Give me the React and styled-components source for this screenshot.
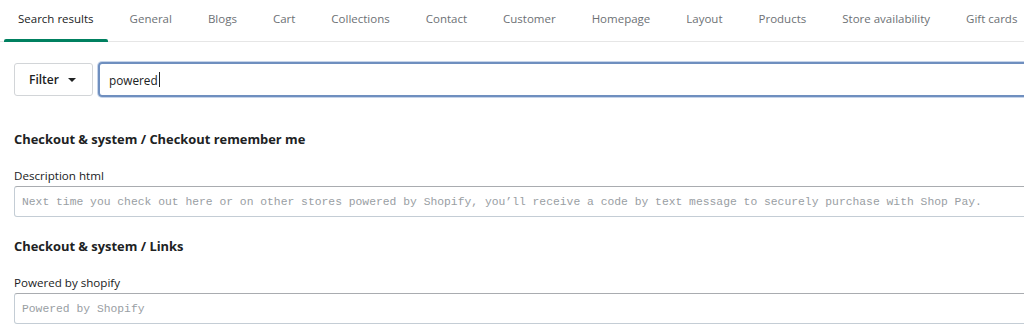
import styled, { createGlobalStyle } from "styled-components";

const GlobalStyle = createGlobalStyle`
  html, body {
    margin: 0;
    padding: 0;
    background: #ffffff;
    overflow: hidden;
  }
  body {
    font-family: "Open Sans", "Noto Sans", sans-serif;
    color: #202223;
  }
`;

const Page = styled.div`
  width: 1100px;
`;

const Tabs = styled.nav`
  display: flex;
  align-items: stretch;
  gap: 8px;
  height: 41px;
  padding-left: 4px;
  border-bottom: 1px solid #e6e6e6;
`;

const Tab = styled.div`
  position: relative;
  display: flex;
  align-items: center;
  padding: 0 14px 4px;
  font-size: 11.5px;
  color: ${({ $active }) => ($active ? "#202223" : "#6d7175")};
  white-space: nowrap;

  &::after {
    content: "";
    position: absolute;
    left: 0;
    right: 0;
    bottom: -1px;
    height: 3px;
    border-radius: 2px 2px 0 0;
    background: ${({ $active }) => ($active ? "#008060" : "transparent")};
  }
`;

const Body = styled.div`
  padding: 20px 0 0 14px;
`;

const SearchRow = styled.div`
  display: flex;
  gap: 5px;
  align-items: center;
  margin-bottom: 13px;
`;

const FilterButton = styled.button`
  display: flex;
  align-items: center;
  gap: 9px;
  height: 33px;
  padding: 0 16px 0 14px;
  border: 1px solid #d2d5d8;
  border-radius: 3px;
  background: #fff;
  font-family: inherit;
  font-size: 12px;
  font-weight: 600;
  color: #202223;
`;

const Caret = styled.span`
  width: 0;
  height: 0;
  border-left: 4px solid transparent;
  border-right: 4px solid transparent;
  border-top: 4px solid #202223;
`;

const SearchBox = styled.div`
  flex: 1;
  height: 31px;
  display: flex;
  align-items: center;
  padding-left: 9px;
  border: 2px solid #6f8fbf;
  box-shadow: 0 0 0 1px #c6d4ea;
  border-radius: 4px;
  font-size: 11.8px;
  color: #202223;
`;

const Cursor = styled.span`
  display: inline-block;
  width: 1px;
  height: 15px;
  margin-left: 1px;
  background: #202223;
  vertical-align: middle;
`;

const Heading = styled.h2`
  margin: 0;
  padding: 20px 0 20px;
  font-size: 12.9px;
  font-weight: 700;
  color: #202223;
`;

const Label = styled.div`
  font-size: 11.6px;
  color: #202223;
  margin-bottom: 3px;
`;

const Field = styled.div`
  height: 29px;
  display: flex;
  align-items: center;
  padding-left: 7px;
  border: 1px solid #c4cdd5;
  border-top-color: #a9acb0;
  border-radius: 3px;
  font-family: "Liberation Mono", "DejaVu Sans Mono", monospace;
  font-size: 11.35px;
  color: #999ea3;
  white-space: nowrap;
`;

const tabs = [
  "Search results",
  "General",
  "Blogs",
  "Cart",
  "Collections",
  "Contact",
  "Customer",
  "Homepage",
  "Layout",
  "Products",
  "Store availability",
  "Gift cards",
];

export default function App() {
  return (
    <Page>
      <GlobalStyle />
      <Tabs>
        {tabs.map((t, i) => (
          <Tab key={t} $active={i === 0}>
            {t}
          </Tab>
        ))}
      </Tabs>
      <Body>
        <SearchRow>
          <FilterButton>
            Filter <Caret />
          </FilterButton>
          <SearchBox>
            powered
            <Cursor />
          </SearchBox>
        </SearchRow>

        <Heading>Checkout &amp; system / Checkout remember me</Heading>
        <Label>Description html</Label>
        <Field>
          Next time you check out here or on other stores powered by Shopify, you’ll receive a code by text
          message to securely purchase with Shop Pay.
        </Field>

        <Heading>Checkout &amp; system / Links</Heading>
        <Label>Powered by shopify</Label>
        <Field>Powered by Shopify</Field>
      </Body>
    </Page>
  );
}
